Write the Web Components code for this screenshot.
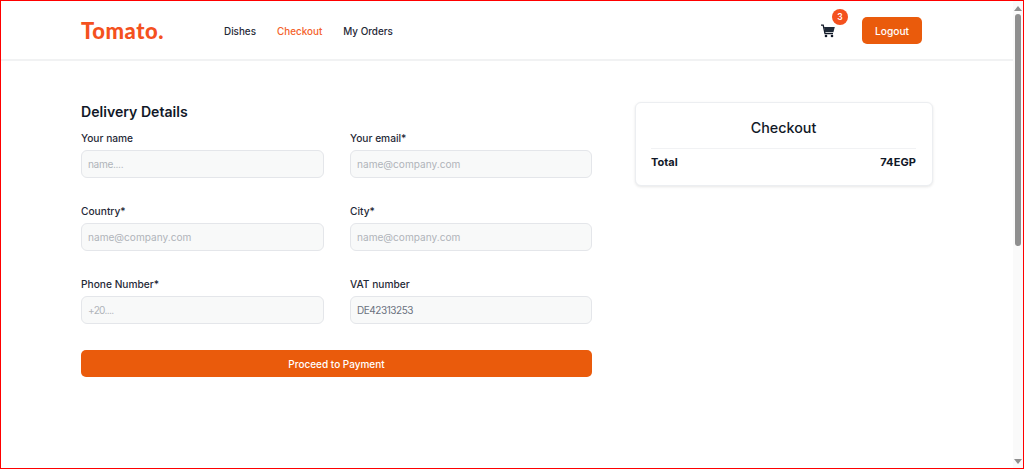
<!DOCTYPE html>
<html><head><meta charset="utf-8">
<style>
html,body{margin:0;padding:0;height:100%;overflow:hidden;background:#fff}
body{font-family:"Inter","Open Sans","Liberation Sans",sans-serif;color:#111827}
</style></head><body>
<app-window>
  <top-bar></top-bar>
  <checkout-page>
    <delivery-form></delivery-form>
    <summary-card></summary-card>
  </checkout-page>
</app-window>
<script>
function el(name, css, html){
  customElements.define(name, class extends HTMLElement{
    connectedCallback(){
      if(this.shadowRoot) return;
      const r=this.attachShadow({mode:'open'});
      r.innerHTML='<style>'+css+'</style>'+(typeof html==='function'?html(this):html);
    }
  });
}
el('app-window',`
:host{display:flex;box-sizing:border-box;width:1024px;height:469px;border:1px solid #f00;overflow:hidden}
.main{flex:1;min-width:0;display:flex;flex-direction:column}
.bar{width:10px;flex:none;background:#fafafa;display:flex;flex-direction:column;align-items:center;padding:5px 0 4px;box-sizing:border-box;justify-content:space-between}
.thumb{width:6px;height:232px;background:#8f8f8f;border-radius:3px;margin-top:3px}
.col{display:flex;flex-direction:column;align-items:center}
.up{width:0;height:0;border:4px solid transparent;border-top:0;border-bottom:5px solid #8f8f8f}
.dn{width:0;height:0;border:4px solid transparent;border-bottom:0;border-top:5px solid #8f8f8f}
`,`<div class="main"><slot></slot></div>
<div class="bar"><div class="col"><div class="up"></div><div class="thumb"></div></div><div class="dn"></div></div>`);

el('top-bar',`
:host{display:flex;align-items:center;box-sizing:border-box;height:60px;flex:none;padding:0 91px 0 80px;border-bottom:2px solid #f1f2f3}
.logo{font:900 22px/1 "Lato","Inter",sans-serif;color:#f4511e;letter-spacing:.55px;width:143px;padding-top:1px}
nav{display:flex;gap:21px;font-size:9.9px;font-weight:500;color:#1f2937;padding-top:1px}
a{color:inherit;text-decoration:none}
a.on{color:#f4622a}
.cart{margin-left:auto;position:relative;width:14px;height:14px;margin-right:27px;top:1px}
.cart svg{display:block}
.badge{position:absolute;left:11px;top:-15px;width:16px;height:16px;border-radius:50%;background:#f4511e;color:#fff;font-size:8.5px;font-weight:600;display:flex;align-items:center;justify-content:center}
.btn{background:#ea5b0c;color:#fff;border-radius:5px;width:60px;height:27px;display:flex;align-items:center;justify-content:center;font-size:10.2px;font-weight:500;margin-top:1px}
`,`<div class="logo">Tomato.</div>
<nav><a>Dishes</a><a class="on">Checkout</a><a>My Orders</a></nav>
<div class="cart"><svg width="14" height="14" viewBox="0 0 14 14"><path fill="none" stroke="#111827" stroke-width="1.3" d="M0 1.2h2.2L4 9.6h8"/><path fill="#1f2937" d="M3 3h10.8l-1.4 5.2H4.1z"/><circle cx="5" cy="12" r="1.3" fill="#111827"/><circle cx="11" cy="12" r="1.3" fill="#111827"/></svg><span class="badge">3</span></div>
<div class="btn">Logout</div>`);

el('checkout-page',`
:host{display:flex;align-items:flex-start;gap:43px;padding:41px 80px 0}
`,`<slot></slot>`);

el('form-field',`
:host{display:flex;flex-direction:column;min-width:0}
label{font-size:10.2px;font-weight:500;line-height:14px;color:#1f2937;margin-bottom:5px}
.in{box-sizing:border-box;height:28px;border:1px solid #e4e6ea;border-radius:6px;background:#f8f9f9;display:flex;align-items:center;padding:0 6px;font-size:10.1px;color:#b0b4ba;white-space:nowrap}
.in.val{color:#6b7280;font-size:10px;letter-spacing:-.45px}
`,h=>`<label>${h.getAttribute('label')}</label><div class="in${h.hasAttribute('value')?' val':''}" style="${h.getAttribute('ls')?'letter-spacing:'+h.getAttribute('ls'):''}">${h.getAttribute('ph')}</div>`);

el('delivery-form',`
:host{display:block;width:511px;flex:none}
h2{margin:0;font-size:14.1px;font-weight:600;line-height:20px;color:#111827;margin-bottom:9px}
.grid{display:grid;grid-template-columns:243px 242px;column-gap:26px;row-gap:26px}
.btn{margin-top:26px;height:27px;background:#ea5b0c;border-radius:5px;color:#fff;font-size:10px;font-weight:500;display:flex;align-items:center;justify-content:center}
`,`<h2>Delivery Details</h2>
<div class="grid">
<form-field label="Your name" ph="name...." ls="-.35px"></form-field>
<form-field label="Your email*" ph="name@company.com"></form-field>
<form-field label="Country*" ph="name@company.com"></form-field>
<form-field label="City*" ph="name@company.com"></form-field>
<form-field label="Phone Number*" ph="+20...." ls="-.7px"></form-field>
<form-field label="VAT number" ph="DE42313253" value></form-field>
</div>
<div class="btn">Proceed to Payment</div>`);

el('summary-card',`
:host{display:block;box-sizing:border-box;width:298px;height:84px;background:#fff;border:1px solid #eceef1;border-radius:6px;box-shadow:0 1px 3px rgba(0,0,0,.1);padding:0 16px 0 15px}
h3{margin:0;height:46px;box-sizing:border-box;border-bottom:1px solid #f1f2f4;text-align:center;font-size:14.3px;font-weight:500;line-height:50px;color:#111827}
.row{display:flex;justify-content:space-between;font-size:11px;font-weight:700;line-height:14px;margin-top:6px;color:#111827}
.v{letter-spacing:.1px}
`,`<h3>Checkout</h3><div class="row"><span>Total</span><span class="v">74EGP</span></div>`);
</script>
</body></html>
